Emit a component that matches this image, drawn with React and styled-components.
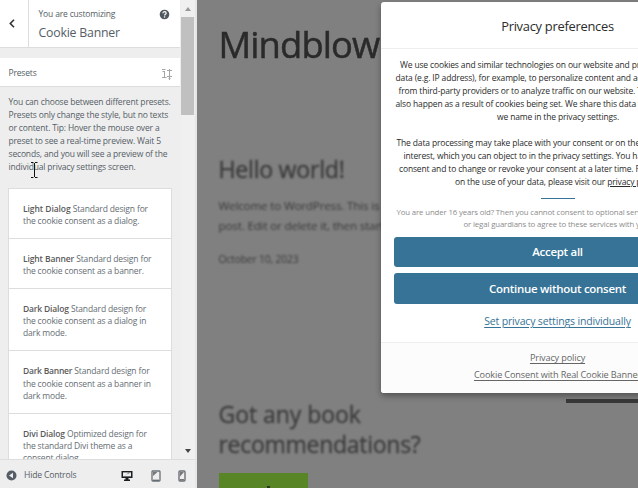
import React from "react";
import styled, { createGlobalStyle } from "styled-components";

const Global = createGlobalStyle`
  * { box-sizing: border-box; }
  body {
    margin: 0;
    overflow: hidden;
    font-family: "Open Sans", "Noto Sans", sans-serif;
    background: #808080;
  }
  svg { display: block; }
`;

const Page = styled.div`
  display: flex;
  width: 638px;
  height: 488px;
  overflow: hidden;
`;

/* ---------- customizer sidebar ---------- */

const Sidebar = styled.aside`
  position: relative;
  display: flex;
  flex-direction: column;
  flex: 0 0 197px;
  height: 488px;
  background: #eee;
  border-right: 2px solid #e6e6e6;
  color: #555d66;
`;

const SidebarBody = styled.div`
  display: flex;
  flex: 0 0 459px;
  overflow: hidden;
`;

const Panel = styled.div`
  flex: 0 0 180px;
  height: 459px;
  overflow: hidden;
`;

const Header = styled.header`
  display: flex;
  height: 48px;
  background: #fff;
  border-bottom: 1px solid #ddd;
`;

const BackButton = styled.button`
  display: flex;
  align-items: center;
  justify-content: center;
  width: 29px;
  padding: 0 5px 0 0;
  border: 0;
  border-right: 1px solid #ddd;
  background: #fff;
`;

const HeaderText = styled.div`
  flex: 1;
  padding: 7px 0 0 9.5px;
`;

const Kicker = styled.div`
  font-size: 8.5px;
  line-height: 13px;
  letter-spacing: -0.165px;
  white-space: nowrap;
`;

const Title = styled.div`
  margin-top: 4px;
  font-size: 12.3px;
  line-height: 17px;
  letter-spacing: -0.2px;
  white-space: nowrap;
`;

const HelpSlot = styled.div`
  padding: 9px 10px 0 0;
`;

const Section = styled.div`
  display: flex;
  align-items: center;
  justify-content: space-between;
  height: 29px;
  margin-top: 10px;
  padding: 0 7px 0 8.5px;
  background: #fff;
  border-bottom: 1px solid #ddd;
  font-size: 8.5px;
  letter-spacing: -0.17px;
`;

const TuneSlot = styled.span`
  padding-top: 4px;
`;

const Description = styled.p`
  margin: 8px 0 0 8.5px;
  font-size: 8.5px;
  line-height: 13px;
  letter-spacing: -0.16px;
  white-space: nowrap;
`;

const PresetList = styled.ul`
  width: 164px;
  margin: 14.5px 0 0 8px;
  padding: 0;
  list-style: none;
  background: #fff;
  border: 1px solid #ddd;
`;

const Preset = styled.li`
  padding: 14.2px 0 10.6px 14px;
  font-size: 8.5px;
  line-height: 12.2px;
  letter-spacing: -0.15px;
  white-space: nowrap;
  border-bottom: 1px solid #ddd;
  color: #666d73;

  b {
    font-weight: 600;
    letter-spacing: ${(p) => p.$nameSpacing};
    color: #5a5a5a;
  }
`;

const Scrollbar = styled.div`
  display: flex;
  flex-direction: column;
  align-items: center;
  justify-content: space-between;
  width: 13px;
  margin-left: 1px;
  padding: 7px 0 6px;
  background: #f0f0f0;
`;

const Thumb = styled.div`
  width: 13px;
  height: 98px;
  margin: 6px 0 auto;
  background: #c0c0c0;
`;

const Arrow = styled.div`
  border: 3.5px solid transparent;
  border-top-width: ${(p) => (p.$up ? 0 : 4)}px;
  border-bottom-width: ${(p) => (p.$up ? 4 : 0)}px;
  border-top-color: #444;
  border-bottom-color: #999;
`;

const Footer = styled.footer`
  display: flex;
  align-items: center;
  flex: 1;
  padding: 3px 0 0 6px;
  border-top: 1px solid #ddd;
  font-size: 8.6px;
  letter-spacing: -0.18px;
`;

const FooterLabel = styled.span`
  flex: 0 0 97px;
  margin: -1px 0 0 7px;
  white-space: nowrap;
`;

const Devices = styled.div`
  display: flex;
  align-items: center;
  gap: 17.5px;
`;

const Cursor = styled.svg`
  position: absolute;
  left: 30px;
  top: 162px;
`;

/* ---------- site preview ---------- */

const Preview = styled.main`
  position: relative;
  flex: 1;
  height: 488px;
  overflow: hidden;
  background: #808080;
`;

const Site = styled.div`
  display: flex;
  flex-direction: column;
  align-items: flex-start;
  padding: 17px 0 0 21.5px;
  white-space: nowrap;
`;

const SiteTitle = styled.div`
  height: 56px;
  font-size: 36.4px;
  line-height: 55px;
  font-weight: 500;
  letter-spacing: -0.9px;
  color: #2a2a2a;
  -webkit-text-stroke: 0.5px #2a2a2a;
  filter: blur(0.6px);
`;

const PostTitle = styled.div`
  margin-top: 78px;
  height: 36px;
  font-size: 23.2px;
  line-height: 36px;
  font-weight: 500;
  letter-spacing: -0.28px;
  color: #3c3c3c;
  -webkit-text-stroke: 0.4px #3c3c3c;
  filter: blur(0.8px);
`;

const PostText = styled.div`
  margin-top: 9px;
  font-size: 11.6px;
  line-height: 19.5px;
  letter-spacing: -0.15px;
  color: #383838;
  filter: blur(0.8px);
`;

const PostDate = styled.div`
  margin-top: 14.5px;
  font-size: 10.2px;
  line-height: 19px;
  letter-spacing: -0.1px;
  color: #383838;
  filter: blur(0.8px);
`;

const CallToAction = styled.div`
  margin-top: 131.5px;
  font-size: 23px;
  line-height: 29.5px;
  font-weight: 500;
  letter-spacing: -0.28px;
  color: #3c3c3c;
  -webkit-text-stroke: 0.3px #3c3c3c;
  filter: blur(0.8px);

  span {
    letter-spacing: -0.05px;
  }
`;

const GreenButton = styled.div`
  display: flex;
  justify-content: center;
  width: 89.5px;
  height: 30px;
  margin-top: 14px;
  padding: 13px 0 0 10px;
  background: #588627;

  &::before {
    content: "";
    width: 3px;
    height: 9px;
    background: #293619;
  }
`;

const Rule = styled.div`
  position: absolute;
  left: 369px;
  top: 399px;
  width: 80px;
  height: 4px;
  background: #383838;
  filter: blur(0.6px);
`;

/* ---------- consent dialog ---------- */

const Dialog = styled.section`
  position: absolute;
  left: 184px;
  top: 2px;
  display: flex;
  flex-direction: column;
  width: 353px;
  height: 391px;
  overflow: hidden;
  border-radius: 3px;
  background: #fff;
  color: #2b2b2b;
  box-shadow: 0 3px 6px rgba(0, 0, 0, 0.35);
`;

const DialogTitle = styled.h1`
  height: 47px;
  margin: 0;
  border-bottom: 1px solid #eee;
  font-size: 12.9px;
  line-height: 49px;
  font-weight: 400;
  letter-spacing: -0.27px;
  text-align: center;
`;

const DialogBody = styled.div`
  display: flex;
  flex-direction: column;
  flex: 1;
  padding: 9px 13px 0;
`;

const Copy = styled.p`
  margin: 0 0 12.6px;
  font-size: 8.5px;
  line-height: 13px;
  letter-spacing: -0.145px;
  white-space: nowrap;
`;

const Line = styled.span`
  display: block;
  padding-left: ${(p) => p.$indent}px;

  u {
    text-underline-offset: 1px;
  }
`;

const Divider = styled.hr`
  flex: none;
  width: 34px;
  height: 1px;
  margin: -2.2px auto 7px;
  border: 0;
  background: #367397;
`;

const Notice = styled.p`
  margin: 0 0 6.4px;
  font-size: 7.8px;
  line-height: 12.3px;
  letter-spacing: -0.13px;
  white-space: nowrap;
  color: #8c8c8c;
`;

const ConsentButton = styled.button`
  height: ${(p) => p.$height}px;
  margin: 0 0 6px;
  padding: 0;
  border: 0;
  border-radius: 3px;
  background: #367397;
  color: #fff;
  font: 600 11.5px "Open Sans", sans-serif;
  line-height: ${(p) => p.$height}px;
  letter-spacing: -0.29px;
`;

const SettingsLink = styled.a`
  margin-top: 2px;
  font-size: 10.5px;
  line-height: 18px;
  letter-spacing: -0.155px;
  text-align: center;
  text-decoration: underline;
  text-underline-offset: 2px;
  color: #367397;
`;

const DialogFooter = styled.div`
  display: flex;
  flex-direction: column;
  align-items: center;
  height: 51px;
  padding-top: 6px;
  border-top: 1px solid #eee;
  background: #fcfcfc;
`;

const FooterLink = styled.a`
  font-size: 9.15px;
  line-height: 17.3px;
  letter-spacing: -0.14px;
  text-decoration: underline;
  text-underline-offset: 1.5px;
  white-space: nowrap;
  color: #666;
`;

const intro = [
  [6, "We use cookies and similar technologies on our website and process your"],
  [1.5, "data (e.g. IP address), for example, to personalize content and ads"],
  [4.5, "from third-party providers or to analyze traffic on our website. This"],
  [1.5, "also happen as a result of cookies being set. We share this data with"],
  [103, "we name in the privacy settings."],
];

const basis = [
  [2.5, "The data processing may take place with your consent or on the basis"],
  [9.5, "interest, which you can object to in the privacy settings. You have"],
  [5, "consent and to change or revoke your consent at a later time. For more"],
];

const description = [
  "You can choose between different presets.",
  "Presets only change the style, but no texts",
  "or content. Tip: Hover the mouse over a",
  "preset to see a real-time preview. Wait 5",
  "seconds, and you will see a preview of the",
  "individual privacy settings screen.",
];

const presets = [
  { name: "Light Dialog", spacing: "-0.07px", lines: ["Standard design for", "the cookie consent as a dialog."] },
  { name: "Light Banner", spacing: "-0.12px", lines: ["Standard design for", "the cookie consent as a banner."] },
  { name: "Dark Dialog", spacing: "-0.17px", lines: ["Standard design for", "the cookie consent as a dialog in", "dark mode."] },
  { name: "Dark Banner", spacing: "-0.24px", lines: ["Standard design for", "the cookie consent as a banner in", "dark mode."] },
  { name: "Divi Dialog", spacing: "-0.15px", lines: ["Optimized design for", "the standard Divi theme as a", "consent dialog."] },
];

const Back = () => (
  <svg width="6" height="9" viewBox="0 0 6 9" fill="none" stroke="#333" strokeWidth="1.6">
    <path d="M5 .8 1.3 4.5 5 8.2" />
  </svg>
);

const Help = () => (
  <svg width="11" height="11" viewBox="0 0 11 11">
    <circle cx="5.5" cy="5.5" r="4.8" fill="#50575e" />
    <path d="M3.9 4.3c0-2.2 3.3-2 3.3-.1 0 1.2-1.6 1.1-1.6 2.4" fill="none" stroke="#fff" strokeWidth="1.2" />
    <rect x="4.9" y="7.3" width="1.3" height="1.3" fill="#fff" />
  </svg>
);

const Tune = () => (
  <svg width="12" height="13" viewBox="0 0 12 13" fill="none" stroke="#a5a5a5">
    <path d="M1 1.5h3.5M1.5 3.5h2M3.5 3v6M1 9.5h4.5M8.5 1v11M6 2.5h5M6 8.5h5M7.5 10.5h2" />
  </svg>
);

const Collapse = () => (
  <svg width="11" height="11" viewBox="0 0 11 11">
    <circle cx="5.5" cy="5.5" r="5" fill="#555d66" />
    <path d="M7 2.7v5.6L3 5.5z" fill="#eee" />
  </svg>
);

const Desktop = () => (
  <svg width="12" height="12" viewBox="0 0 12 12">
    <path d="M.5 1h11v7h-4v1.6H9V11H3V9.6h1.5V8h-4z" fill="#191e23" />
    <path d="M2 2.4h8v4H2z" fill="#eee" />
    <path d="M2.5 6.4 6 4.5l1-2.1h3L6.5 4z" fill="#666" />
  </svg>
);

const Tablet = () => (
  <svg width="10" height="12" viewBox="0 0 10 12">
    <rect x="1" y="1" width="8" height="10" rx=".8" fill="#eee" stroke="#6b7177" strokeWidth="1.3" />
    <path d="M2 6V2h4.5z" fill="#777" />
    <path d="M2 10.2h6" stroke="#555d66" />
  </svg>
);

const Phone = () => (
  <svg width="8" height="12" viewBox="0 0 8 12">
    <rect x="1" y="1" width="6" height="10" rx="1" fill="#eee" stroke="#6b7177" strokeWidth="1.4" />
    <path d="M2 6.5V2h4zM2 9h4v1.5H2z" fill="#777" />
  </svg>
);

export default function App() {
  return (
    <>
      <Global />
      <Page>
        <Sidebar>
          <SidebarBody>
            <Panel>
              <Header>
                <BackButton aria-label="Back"><Back /></BackButton>
                <HeaderText>
                  <Kicker>You are customizing</Kicker>
                  <Title>Cookie Banner</Title>
                </HeaderText>
                <HelpSlot><Help /></HelpSlot>
              </Header>
              <Section>Presets<TuneSlot><Tune /></TuneSlot></Section>
              <Description>
                {description.map((line) => <Line key={line} $indent={0}>{line}</Line>)}
              </Description>
              <PresetList>
                {presets.map((p) => (
                  <Preset key={p.name} $nameSpacing={p.spacing}>
                    <b>{p.name}</b> {p.lines[0]}
                    {p.lines.slice(1).map((line) => <Line key={line} $indent={0}>{line}</Line>)}
                  </Preset>
                ))}
              </PresetList>
            </Panel>
            <Scrollbar><Arrow $up /><Thumb /><Arrow /></Scrollbar>
          </SidebarBody>
          <Footer>
            <Collapse />
            <FooterLabel>Hide Controls</FooterLabel>
            <Devices><Desktop /><Tablet /><Phone /></Devices>
          </Footer>
          <Cursor width="8" height="16" viewBox="0 0 8 16" fill="none" stroke="#111">
            <path d="M1 .5h2.5M5 .5h2.5M4.5 1v14M1 15.5h2.5M5 15.5h2.5" />
          </Cursor>
        </Sidebar>

        <Preview>
          <Site>
            <SiteTitle>Mindblown</SiteTitle>
            <PostTitle>Hello world!</PostTitle>
            <PostText>
              Welcome to WordPress. This is your<br />
              post. Edit or delete it, then start
            </PostText>
            <PostDate>October 10, 2023</PostDate>
            <CallToAction><span>Got any book</span><br />recommendations?</CallToAction>
            <GreenButton />
          </Site>
          <Rule />
          <Dialog>
            <DialogTitle>Privacy preferences</DialogTitle>
            <DialogBody>
              <Copy>
                {intro.map(([x, text]) => <Line key={text} $indent={x}>{text}</Line>)}
              </Copy>
              <Copy>
                {basis.map(([x, text]) => <Line key={text} $indent={x}>{text}</Line>)}
                <Line $indent={61}>on the use of your data, please visit our <u>privacy policy</u>.</Line>
              </Copy>
              <Divider />
              <Notice>
                <Line $indent={2.5}>You are under 16 years old? Then you cannot consent to optional services</Line>
                <Line $indent={69.5}>or legal guardians to agree to these services with you.</Line>
              </Notice>
              <ConsentButton $height={30}>Accept all</ConsentButton>
              <ConsentButton $height={31}>Continue without consent</ConsentButton>
              <SettingsLink>Set privacy settings individually</SettingsLink>
            </DialogBody>
            <DialogFooter>
              <FooterLink>Privacy policy</FooterLink>
              <FooterLink>Cookie Consent with Real Cookie Banner</FooterLink>
            </DialogFooter>
          </Dialog>
        </Preview>
      </Page>
    </>
  );
}
